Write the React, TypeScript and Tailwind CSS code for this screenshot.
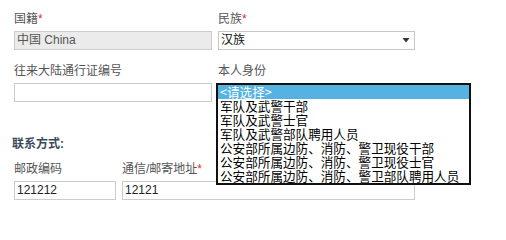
import React from "react";

const font = "font-['Liberation_Sans','Noto_Sans_CJK_SC',sans-serif]";

function Label({ text, req }: { text: string; req?: boolean }) {
  return (
    <div className="h-[16px] text-[12px] leading-[16px] text-[#555555] whitespace-nowrap">
      {text}
      {req && <span className="text-[#e02d2d]">*</span>}
    </div>
  );
}

const options = [
  "<请选择>",
  "军队及武警干部",
  "军队及武警士官",
  "军队及武警部队聘用人员",
  "公安部所属边防、消防、警卫现役干部",
  "公安部所属边防、消防、警卫现役士官",
  "公安部所属边防、消防、警卫部队聘用人员",
];

export default function App() {
  return (
    <div className={`${font} relative w-[506px] h-[223px] overflow-hidden bg-white pl-[14px] pt-[11px]`}>
      {/* row 1 */}
      <div className="flex gap-[6px]">
        <div className="w-[198px]">
          <Label text="国籍" req />
          <div className="mt-[4px] h-[19px] border border-[#cccccc] bg-[#ebebeb] px-[2px] text-[12px] leading-[17px] text-[#555555]">
            中国 China
          </div>
        </div>
        <div className="w-[197px]">
          <Label text="民族" req />
          <div className="mt-[4px] flex h-[19px] items-center justify-between border border-[#c8c8c8] bg-white pl-[2px] pr-[4px] text-[12px] leading-[17px] text-[#111111]">
            <span>汉族</span>
            <svg width="8" height="5" viewBox="0 0 8 5">
              <polygon points="0.5,0 7.5,0 4,4.5" fill="#333333" />
            </svg>
          </div>
        </div>
      </div>

      {/* row 2 */}
      <div className="mt-[13px] flex gap-[6px]">
        <div className="w-[198px]">
          <Label text="往来大陆通行证编号" />
          <div className="mt-[4px] h-[19px] border border-[#cccccc] bg-white" />
        </div>
        <div className="w-[197px]">
          <Label text="本人身份" />
          <div className="mt-[4px] h-[19px]" />
        </div>
      </div>

      {/* section title */}
      <div className="-ml-[2px] mt-[34px] h-[16px] text-[12px] font-bold leading-[16px] text-[#3b4a5a]">
        联系方式:
      </div>

      {/* row 3 */}
      <div className="mt-[9px] flex gap-[6px]">
        <div className="w-[102px]">
          <Label text="邮政编码" />
          <div className="mt-[4px] h-[19px] border border-[#cccccc] bg-white px-[2px] text-[12px] leading-[17px] text-[#222222]">
            121212
          </div>
        </div>
        <div className="w-[293px]">
          <Label text="通信/邮寄地址" req />
          <div className="mt-[4px] h-[19px] border border-[#cccccc] bg-white px-[2px] text-[12px] leading-[17px] text-[#222222]">
            12121
          </div>
        </div>
      </div>

      {/* open listbox overlay */}
      <div className="absolute left-[216px] top-[83px] w-[255px] h-[102px] border-2 border-[#111111] bg-white font-['Noto_Sans_CJK_SC',sans-serif]">
        {options.map((o, i) => (
          <div
            key={o}
            className={
              i === 0
                ? "h-[14px] bg-[#56b2e0] px-[2px] text-[12.6px] leading-[14px] text-white whitespace-nowrap"
                : "h-[14px] px-[2px] text-[12.6px] leading-[14px] text-black whitespace-nowrap"
            }
          >
            {o}
          </div>
        ))}
      </div>
    </div>
  );
}
